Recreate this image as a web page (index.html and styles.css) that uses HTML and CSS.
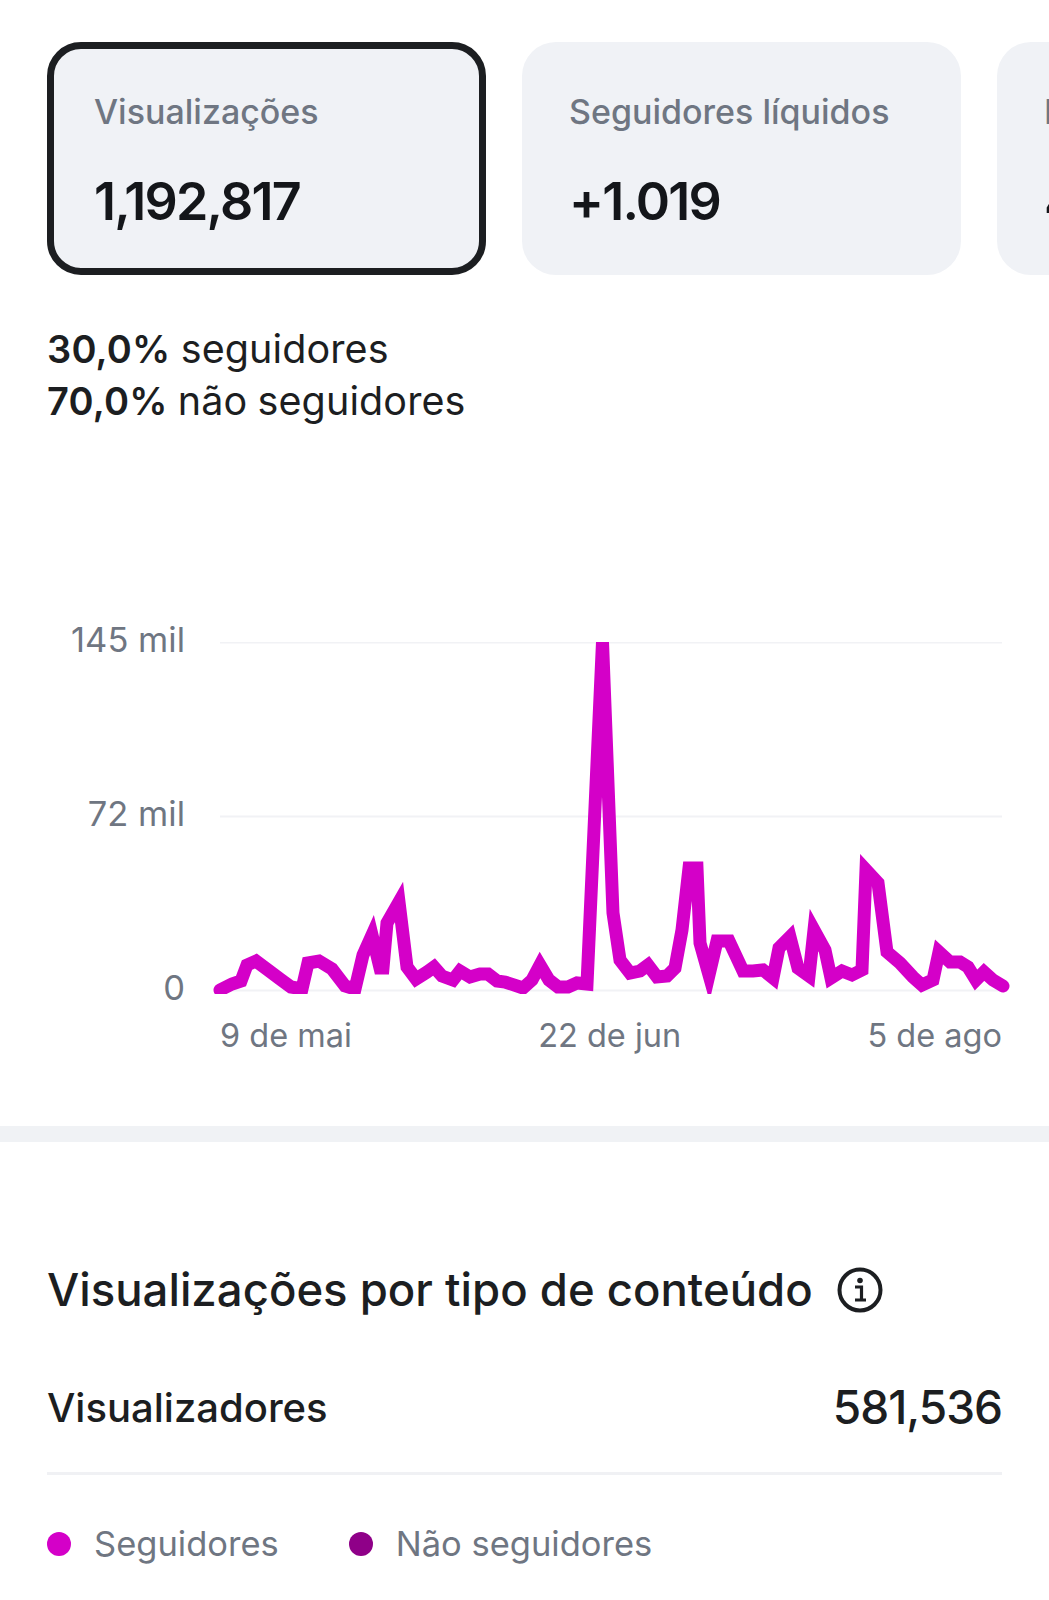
FILE: index.html
```html
<!DOCTYPE html>
<html lang="pt">
<head>
<meta charset="utf-8">
<title>Visualizações</title>
<link rel="stylesheet" href="styles.css">
</head>
<body>
<main class="page">
  <section class="cards">
    <div class="card card-active">
      <div class="card-label">Visualizações</div>
      <div class="card-value">1,192,817</div>
    </div>
    <div class="card">
      <div class="card-label">Seguidores líquidos</div>
      <div class="card-value">+1.019</div>
    </div>
    <div class="card">
      <div class="card-label">Interações</div>
      <div class="card-value">41,250</div>
    </div>
  </section>

  <section class="split">
    <p class="split-line"><strong>30,0%</strong> seguidores</p>
    <p class="split-line"><strong>70,0%</strong> não seguidores</p>
  </section>

  <section class="chart">
    <div class="y-axis">
      <span class="y-label">145 mil</span>
      <span class="y-label">72 mil</span>
      <span class="y-label">0</span>
    </div>
    <div class="plot">
      <svg class="plot-svg" viewBox="212 642 798 352" width="798" height="352" aria-hidden="true">
        <g class="grid">
          <line x1="220" y1="642.5" x2="1002" y2="642.5"/>
          <line x1="220" y1="816.5" x2="1002" y2="816.5"/>
          <line x1="220" y1="990.5" x2="1002" y2="990.5"/>
        </g>
        <polyline class="series" points="220,990 232,984 241,981 247,965 256,961 268,970 280,979 291,987 302,989 308,963 319,961 332,969 345,986 355,989 363,955 372,935 380,968 383,968 387,923 399,902 407,967 416,979 427,972 434,967 442,976 453,980 460,971 470,977 480,974 488,974 497,981 505,982 523,988 532,980 540,965 549,980 558,987 568,987 577,983 587,984 602.5,642 613,913 620,960 630,973 640,971 648,965 657,977 667,976 675,968 682,930 689,868 697,868 700,943 709,975 717,941 729,941 743,971 753,971 763,970 773,978 779,948 790,937 798,968 809,976 814,930 825,950 831,978 842,971 852,975 862,970 866,870 878,883 887,952 900,963 913,977 922,985 933,980 939,952 950,962 960,962 968,967 976,980 984,972 993,980 1003,986"/>
      </svg>
      <div class="x-axis">
        <span>9 de mai</span>
        <span>22 de jun</span>
        <span>5 de ago</span>
      </div>
    </div>
  </section>

  <div class="band"></div>

  <section class="breakdown">
    <div class="heading-row">
      <h2 class="heading">Visualizações por tipo de conteúdo</h2>
      <svg class="info" viewBox="0 0 46 46" width="46" height="46" aria-hidden="true">
        <circle cx="23" cy="23" r="20.5" fill="none" stroke="#1c1e21" stroke-width="4"/>
        <circle cx="23" cy="13.5" r="2.8" fill="#1c1e21"/>
        <path d="M18 20h6.5v12.5M18 33h11" fill="none" stroke="#1c1e21" stroke-width="3.2"/>
      </svg>
    </div>
    <div class="total-row">
      <span class="total-label">Visualizadores</span>
      <span class="total-value">581,536</span>
    </div>
    <div class="legend">
      <span class="legend-item"><i class="dot dot-a"></i>Seguidores</span>
      <span class="legend-item"><i class="dot dot-b"></i>Não seguidores</span>
    </div>
  </section>
</main>
</body>
</html>
```
FILE: styles.css
```css
* { box-sizing: border-box; }
html, body { margin: 0; padding: 0; background: #fff; }
body { font-family: Inter, "Noto Sans", sans-serif; color: #1c1e21; }
.page { width: 1049px; height: 1600px; overflow: hidden; }

.cards { display: flex; gap: 36px; padding: 42px 0 0 47px; }
.card {
  flex: none;
  width: 439px;
  height: 233px;
  border-radius: 34px;
  background: #f0f2f6;
  padding: 51px 47px 0;
  overflow: hidden;
}
.card-active { border: 7px solid #1c1e21; padding: 44px 40px 0; }
.card-label { font-size: 34px; line-height: 38px; font-weight: 500; color: #6f7682; white-space: nowrap; }
.card-value { margin-top: 41px; font-size: 52px; line-height: 60px; font-weight: 600; letter-spacing: -1.8px; color: #14161a; white-space: nowrap; }

.split { padding: 48px 47px 0; }
.split-line { margin: 0; font-size: 39.5px; line-height: 52px; letter-spacing: .1px; word-spacing: -1px; }
.split-line strong { font-size: 38px; font-weight: 600; letter-spacing: .2px; }

.chart { display: flex; padding-top: 215px; }
.y-axis { flex: none; width: 185px; height: 360px; display: flex; flex-direction: column; margin-top: -24px; }
.y-label { flex: none; height: 174px; line-height: 44px; text-align: right; font-size: 34.5px; color: #6f7682; }
.plot { flex: none; width: 820px; margin-left: 27px; }
.plot-svg { display: block; overflow: hidden; }
.grid line { stroke: #f1f2f5; stroke-width: 2; }
.series { fill: none; stroke: #d400c8; stroke-width: 13; stroke-linejoin: miter; stroke-miterlimit: 10; stroke-linecap: round; }
.x-axis { display: flex; justify-content: space-between; width: 782px; margin: 20px 0 0 8px; font-size: 32.5px; line-height: 44px; color: #6f7682; }

.band { height: 16px; margin-top: 68px; background: #f0f2f5; }

.breakdown { padding: 118px 47px 0; }
.heading-row { display: flex; align-items: center; gap: 24px; height: 60px; }
.heading { margin: 0; font-size: 45.5px; line-height: 60px; font-weight: 500; color: #1c1e21; white-space: nowrap; }
.info { flex: none; }
.total-row { display: flex; justify-content: space-between; align-items: center; height: 133px; margin-top: 22px; border-bottom: 3px solid #f0f1f4; }
.total-label { font-size: 40px; font-weight: 500; }
.total-value { font-size: 46px; font-weight: 500; letter-spacing: -1px; }
.legend { display: flex; gap: 70px; margin-top: 45px; }
.legend-item { display: flex; align-items: center; gap: 23px; font-size: 34.5px; line-height: 48px; color: #6f7682; }
.dot { display: block; width: 24px; height: 24px; border-radius: 50%; }
.dot-a { background: #d400c8; }
.dot-b { background: #8f0088; }
```
